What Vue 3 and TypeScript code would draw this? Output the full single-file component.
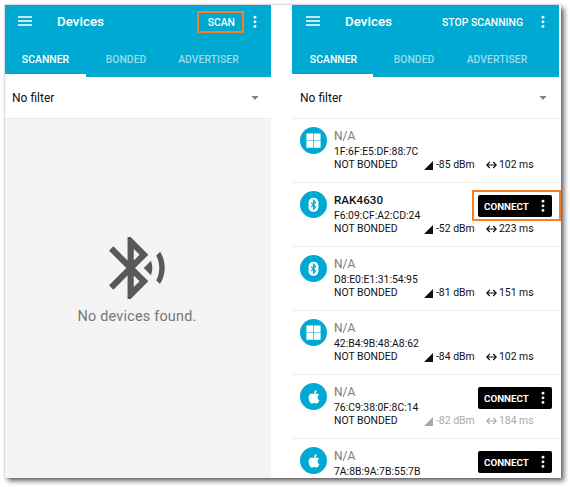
<script setup lang="ts">
interface Reading {
  rssi: number
  interval: number
}

interface Device {
  name: string
  mac: string
  icon: 'windows' | 'bluetooth' | 'apple'
  reading?: Reading
  connectable: boolean
  highlighted?: boolean
  stale?: boolean
}

interface Panel {
  id: string
  action: string
  highlighted: boolean
  devices: Device[]
}

const tabs: string[] = ['SCANNER', 'BONDED', 'ADVERTISER']

const panels: Panel[] = [
  { id: 'idle', action: 'SCAN', highlighted: true, devices: [] },
  {
    id: 'scanning',
    action: 'STOP SCANNING',
    highlighted: false,
    devices: [
      { name: 'N/A', mac: '1F:6F:E5:DF:88:7C', icon: 'windows', reading: { rssi: -85, interval: 102 }, connectable: false },
      { name: 'RAK4630', mac: 'F6:09:CF:A2:CD:24', icon: 'bluetooth', reading: { rssi: -52, interval: 223 }, connectable: true, highlighted: true },
      { name: 'N/A', mac: 'D8:E0:E1:31:54:95', icon: 'bluetooth', reading: { rssi: -81, interval: 151 }, connectable: false },
      { name: 'N/A', mac: '42:B4:9B:48:A8:62', icon: 'windows', reading: { rssi: -84, interval: 102 }, connectable: false },
      { name: 'N/A', mac: '76:C9:38:0F:8C:14', icon: 'apple', reading: { rssi: -82, interval: 184 }, connectable: true, stale: true },
      { name: 'N/A', mac: '7A:8B:9A:7B:55:7B', icon: 'apple', connectable: true },
    ],
  },
]
</script>

<template>
  <main class="page">
    <div class="sheet">
      <section v-for="panel in panels" :key="panel.id" class="phone" :class="panel.id">
        <header class="header">
          <div class="toolbar">
            <svg class="menu" viewBox="0 0 14 10"><path d="M0 1h14M0 5h14M0 9h14" stroke="#fff" stroke-width="1.5" /></svg>
            <h1 class="title">Devices</h1>
            <button class="action" :class="{ marked: panel.highlighted }">{{ panel.action }}</button>
            <svg class="more" viewBox="0 0 4 14"><circle cx="2" cy="2.2" r="1.4" /><circle cx="2" cy="6.8" r="1.4" /><circle cx="2" cy="11.4" r="1.4" /></svg>
          </div>
          <nav class="tabs">
            <span v-for="(tab, i) in tabs" :key="tab" class="tab" :class="{ active: i === 0 }">{{ tab }}</span>
          </nav>
        </header>
        <div class="filter">
          <span>No filter</span>
          <svg class="caret" viewBox="0 0 8 4"><path d="M0.4 0h7.2L4 4z" fill="#808080" /></svg>
        </div>

        <ul v-if="panel.devices.length" class="list">
          <li v-for="device in panel.devices" :key="device.mac" class="row">
            <div class="avatar">
              <svg v-if="device.icon === 'windows'" class="glyph" viewBox="0 0 27 27">
                <path d="M6.4 6.6h6.8v6.8H6.4zM13.8 6.6h6.8v6.8h-6.8zM6.4 14h6.8v6.8H6.4zM13.8 14h6.8v6.8h-6.8z" fill="#fff" />
              </svg>
              <svg v-else-if="device.icon === 'bluetooth'" class="glyph" viewBox="0 0 27 27">
                <rect x="8.6" y="6.8" width="9.8" height="14" rx="4.6" fill="#fff" />
                <path d="M11.1 11.6l4.6 4.4-2.2 2.1v-8.8l2.2 2.3-4.6 4.4" fill="none" stroke="#00a9d1" stroke-width="1.2" />
              </svg>
              <svg v-else class="glyph apple" viewBox="0 0 24 24">
                <path fill="#fff" d="M18.71,19.5C17.88,20.74 17,21.95 15.66,21.97C14.32,22 13.89,21.18 12.37,21.18C10.84,21.18 10.37,21.95 9.1,22C7.79,22.05 6.8,20.68 5.96,19.47C4.25,17 2.94,12.45 4.7,9.39C5.57,7.87 7.13,6.91 8.82,6.88C10.1,6.86 11.32,7.75 12.11,7.75C12.89,7.75 14.37,6.68 15.92,6.84C16.57,6.87 18.39,7.1 19.56,8.82C19.47,8.88 17.39,10.1 17.41,12.63C17.44,15.65 20.06,16.66 20.09,16.67C20.06,16.74 19.67,18.11 18.71,19.5M13,3.5C13.73,2.67 14.94,2.04 15.94,2C16.07,3.17 15.6,4.35 14.9,5.19C14.21,6.04 13.07,6.7 11.95,6.61C11.8,5.46 12.36,4.26 13,3.5Z" />
              </svg>
            </div>
            <div class="info">
              <div class="name" :class="{ known: device.name !== 'N/A' }">{{ device.name }}</div>
              <div class="mac">{{ device.mac }}</div>
              <div v-if="device.reading" class="meta">
                <span class="bond">NOT BONDED</span>
                <span class="rssi" :class="{ stale: device.stale }">
                  <svg class="signal" viewBox="0 0 9 9"><path d="M9 0v9H0z" fill="currentColor" /></svg>{{ device.reading.rssi }} dBm
                </span>
                <span class="interval" :class="{ stale: device.stale }">
                  <svg class="arrows" viewBox="0 0 11 8"><path d="M1 4h9M3.7 1L.8 4l2.9 3M7.3 1l2.9 3-2.9 3" fill="none" stroke="currentColor" stroke-width="1.1" /></svg>{{ device.reading.interval }} ms
                </span>
              </div>
            </div>
            <div v-if="device.connectable" class="connect" :class="{ marked: device.highlighted }">
              <span>CONNECT</span>
              <svg class="more" viewBox="0 0 4 14"><circle cx="2" cy="2.2" r="1.4" /><circle cx="2" cy="6.8" r="1.4" /><circle cx="2" cy="11.4" r="1.4" /></svg>
            </div>
          </li>
        </ul>

        <div v-else class="empty">
          <svg class="searching" viewBox="3 2 18.1 20">
            <path fill="#595959" d="M14.24 12.01l2.32 2.32c.28-.72.44-1.51.44-2.33 0-.82-.16-1.59-.43-2.31l-2.33 2.32zm5.29-5.3l-1.26 1.26c.63 1.21.98 2.57.98 4.02s-.36 2.82-.98 4.02l1.2 1.2c.97-1.54 1.54-3.36 1.54-5.31-.01-1.89-.55-3.67-1.48-5.19zm-3.82 1L10 2H9v7.59L4.41 5 3 6.41 8.59 12 3 17.59 4.41 19 9 14.41V22h1l5.71-5.71-4.3-4.29 4.3-4.29zM11 5.83l1.88 1.88L11 9.59V5.83zm1.88 10.46L11 18.17v-3.76l1.88 1.88z" />
          </svg>
          <p>No devices found.</p>
        </div>
      </section>
    </div>
  </main>
</template>

<style>
body {
  margin: 0;
  background: #fff;
}
</style>

<style scoped>
.page {
  box-sizing: border-box;
  width: 570px;
  height: 487px;
  padding: 5px;
  overflow: hidden;
  font-family: Roboto, "Liberation Sans", sans-serif;
  color: #111;
}
.sheet {
  display: flex;
  gap: 21px;
  width: 556px;
  height: 473px;
  background: #fff;
  box-shadow: 0 0 2px rgba(0, 0, 0, 0.3), 3px 3px 5px rgba(0, 0, 0, 0.6);
}
.phone {
  display: flex;
  flex-direction: column;
  width: 266px;
  height: 473px;
}
.scanning {
  width: 267px;
}
.header {
  flex: none;
  height: 72px;
  background: #00a9d1;
  color: #fff;
}
.toolbar {
  display: flex;
  align-items: center;
  height: 33px;
  padding: 0 14px 0 13px;
}
.scanning .toolbar {
  padding-left: 14px;
}
.menu {
  width: 14px;
  height: 10px;
  margin-top: -2px;
}
.title {
  flex: 1;
  margin: 0 0 0 25px;
  font-size: 13.4px;
  font-weight: 500;
}
.action {
  box-sizing: border-box;
  height: 22px;
  padding: 0 7px 0 9px;
  margin: 1px 9px 0 0;
  border: 2px solid transparent;
  background: none;
  color: #fff;
  font-family: inherit;
  font-size: 10.4px;
  font-weight: 500;
  line-height: 17px;
  white-space: nowrap;
}
.action.marked {
  border-color: #f97d22;
}
.more {
  flex: none;
  width: 4px;
  height: 14px;
  fill: #fff;
}
.tabs {
  display: grid;
  grid-template-columns: 81px 80px 1fr;
  height: 39px;
}
.tab {
  box-sizing: border-box;
  height: 39px;
  border-bottom: 3px solid transparent;
  font-size: 10.4px;
  font-weight: 500;
  line-height: 43px;
  letter-spacing: 0.03px;
  text-align: center;
  color: #99dced;
}
.scanning .tab {
  padding-left: 2px;
}
.tab:last-child {
  padding-right: 20px;
}
.tab.active {
  border-color: #fff;
  color: #fff;
}
.filter {
  box-sizing: border-box;
  flex: none;
  display: flex;
  align-items: center;
  justify-content: space-between;
  height: 42px;
  padding: 0 12px 0 7px;
  border-bottom: 1px solid #ececec;
  font-size: 12px;
}
.scanning .filter {
  padding-left: 8px;
}
.caret {
  width: 8px;
  height: 4px;
}
.empty {
  flex: 1;
  padding-top: 118px;
  background: #f4f4f4;
  text-align: center;
}
.searching {
  display: block;
  width: 56px;
  height: 62px;
  margin: 0 0 0 104px;
}
.empty p {
  margin: 8px 0 0;
  padding-right: 2px;
  font-size: 14.4px;
  line-height: 20px;
  letter-spacing: 0.22px;
  color: #777;
}
.list {
  flex: 1;
  min-height: 0;
  margin: 0;
  padding: 0;
  overflow: hidden;
  list-style: none;
}
.scanning .list {
  width: 269px;
}
.row {
  box-sizing: border-box;
  position: relative;
  display: flex;
  height: 64px;
  padding: 8px 0 0 8px;
}
.row::after {
  content: "";
  position: absolute;
  left: 0;
  bottom: 0;
  width: 267px;
  height: 1px;
  background: #ececec;
}
.row:last-child {
  height: 41px;
}
.row:last-child::after {
  display: none;
}
.avatar {
  display: flex;
  align-items: center;
  justify-content: center;
  flex: none;
  width: 27px;
  height: 27px;
  margin-right: 7px;
  border-radius: 50%;
  background: #00a9d1;
}
.glyph {
  width: 27px;
  height: 27px;
}
.glyph.apple {
  width: 16px;
  height: 16px;
}
.info {
  width: 210px;
}
.name {
  height: 17px;
  font-size: 12px;
  line-height: 18px;
  color: #7b7b7b;
}
.name.known {
  font-size: 11.7px;
  font-weight: 500;
  color: #111;
}
.mac {
  height: 14px;
  font-size: 10.4px;
  line-height: 15px;
}
.meta {
  display: grid;
  grid-template-columns: 90px 62px 1fr;
  height: 14px;
  font-size: 10.4px;
  line-height: 14px;
  white-space: nowrap;
}
.rssi,
.interval {
  display: flex;
  align-items: center;
}
.signal {
  width: 9px;
  height: 9px;
  margin-right: 3px;
}
.arrows {
  width: 11px;
  height: 8px;
  margin-right: 2px;
}
.stale {
  color: #a9a9a9;
}
.connect {
  position: absolute;
  top: 12px;
  left: 186px;
  box-sizing: border-box;
  display: flex;
  align-items: center;
  justify-content: space-between;
  width: 74px;
  height: 22px;
  padding: 0 7px 0 6px;
  border-radius: 2px;
  background: #000;
  color: #fff;
  font-size: 9.8px;
  font-weight: 700;
}
.connect.marked::before {
  content: "";
  position: absolute;
  box-sizing: border-box;
  left: -6px;
  top: -5px;
  width: 89px;
  height: 31px;
  border: 2px solid #f97d22;
}
</style>
